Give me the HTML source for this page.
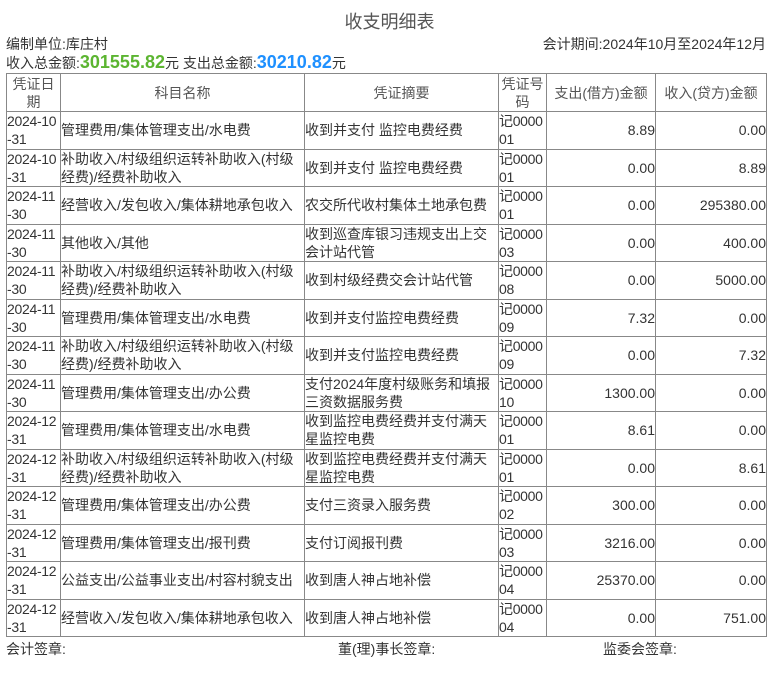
<!DOCTYPE html>
<html><head><meta charset="utf-8"><style>
body{margin:0;width:779px;height:677px;background:#fff;font-family:"Liberation Sans","Noto Sans CJK SC",sans-serif;color:#333;font-size:14px;position:relative;overflow:hidden}
.a{position:absolute;white-space:nowrap;line-height:16px}
table{position:absolute;left:6px;top:73px;border-collapse:collapse;table-layout:fixed;width:760px}
td{border:1px solid #888;padding:0;font-size:14px;line-height:18px;vertical-align:middle;overflow:hidden;word-break:break-all}
thead td{color:#555;text-align:center;height:37px}
tbody tr{height:37.5px}
tbody td:first-child,tbody td:nth-child(4){letter-spacing:-0.3px;white-space:nowrap}
td.r{text-align:right}
</style></head><body>
<div class="a" style="left:0;width:779px;text-align:center;top:12px;font-size:18px;line-height:20px;color:#555">收支明细表</div>
<div class="a" style="left:6px;top:36px">编制单位:库庄村</div>
<div class="a" style="right:13px;top:36px">会计期间:2024年10月至2024年12月</div>
<div class="a" style="left:6px;top:53px;line-height:19px">收入总金额:<b style="color:#5cb531;font-size:18px">301555.82</b>元 支出总金额:<b style="color:#1e90ff;font-size:18px">30210.82</b>元</div>
<table>
<colgroup><col style="width:54px"><col style="width:244px"><col style="width:194px"><col style="width:48px"><col style="width:109px"><col style="width:111px"></colgroup>
<thead><tr><td>凭证日期</td><td>科目名称</td><td>凭证摘要</td><td>凭证号码</td><td>支出(借方)金额</td><td>收入(贷方)金额</td></tr></thead>
<tbody>
<tr><td>2024-10<br>-31</td><td>管理费用/集体管理支出/水电费</td><td>收到并支付 监控电费经费</td><td>记0000<br>01</td><td class="r">8.89</td><td class="r">0.00</td></tr>
<tr><td>2024-10<br>-31</td><td>补助收入/村级组织运转补助收入(村级经费)/经费补助收入</td><td>收到并支付 监控电费经费</td><td>记0000<br>01</td><td class="r">0.00</td><td class="r">8.89</td></tr>
<tr><td>2024-11<br>-30</td><td>经营收入/发包收入/集体耕地承包收入</td><td>农交所代收村集体土地承包费</td><td>记0000<br>01</td><td class="r">0.00</td><td class="r">295380.00</td></tr>
<tr><td>2024-11<br>-30</td><td>其他收入/其他</td><td>收到巡查库银习违规支出上交会计站代管</td><td>记0000<br>03</td><td class="r">0.00</td><td class="r">400.00</td></tr>
<tr><td>2024-11<br>-30</td><td>补助收入/村级组织运转补助收入(村级经费)/经费补助收入</td><td>收到村级经费交会计站代管</td><td>记0000<br>08</td><td class="r">0.00</td><td class="r">5000.00</td></tr>
<tr><td>2024-11<br>-30</td><td>管理费用/集体管理支出/水电费</td><td>收到并支付监控电费经费</td><td>记0000<br>09</td><td class="r">7.32</td><td class="r">0.00</td></tr>
<tr><td>2024-11<br>-30</td><td>补助收入/村级组织运转补助收入(村级经费)/经费补助收入</td><td>收到并支付监控电费经费</td><td>记0000<br>09</td><td class="r">0.00</td><td class="r">7.32</td></tr>
<tr><td>2024-11<br>-30</td><td>管理费用/集体管理支出/办公费</td><td>支付2024年度村级账务和填报三资数据服务费</td><td>记0000<br>10</td><td class="r">1300.00</td><td class="r">0.00</td></tr>
<tr><td>2024-12<br>-31</td><td>管理费用/集体管理支出/水电费</td><td>收到监控电费经费并支付满天星监控电费</td><td>记0000<br>01</td><td class="r">8.61</td><td class="r">0.00</td></tr>
<tr><td>2024-12<br>-31</td><td>补助收入/村级组织运转补助收入(村级经费)/经费补助收入</td><td>收到监控电费经费并支付满天星监控电费</td><td>记0000<br>01</td><td class="r">0.00</td><td class="r">8.61</td></tr>
<tr><td>2024-12<br>-31</td><td>管理费用/集体管理支出/办公费</td><td>支付三资录入服务费</td><td>记0000<br>02</td><td class="r">300.00</td><td class="r">0.00</td></tr>
<tr><td>2024-12<br>-31</td><td>管理费用/集体管理支出/报刊费</td><td>支付订阅报刊费</td><td>记0000<br>03</td><td class="r">3216.00</td><td class="r">0.00</td></tr>
<tr><td>2024-12<br>-31</td><td>公益支出/公益事业支出/村容村貌支出</td><td>收到唐人神占地补偿</td><td>记0000<br>04</td><td class="r">25370.00</td><td class="r">0.00</td></tr>
<tr><td>2024-12<br>-31</td><td>经营收入/发包收入/集体耕地承包收入</td><td>收到唐人神占地补偿</td><td>记0000<br>04</td><td class="r">0.00</td><td class="r">751.00</td></tr>
</tbody></table>
<div class="a" style="left:6px;top:641px">会计签章:</div>
<div class="a" style="left:338px;top:641px">董(理)事长签章:</div>
<div class="a" style="left:603px;top:641px">监委会签章:</div>
</body></html>
